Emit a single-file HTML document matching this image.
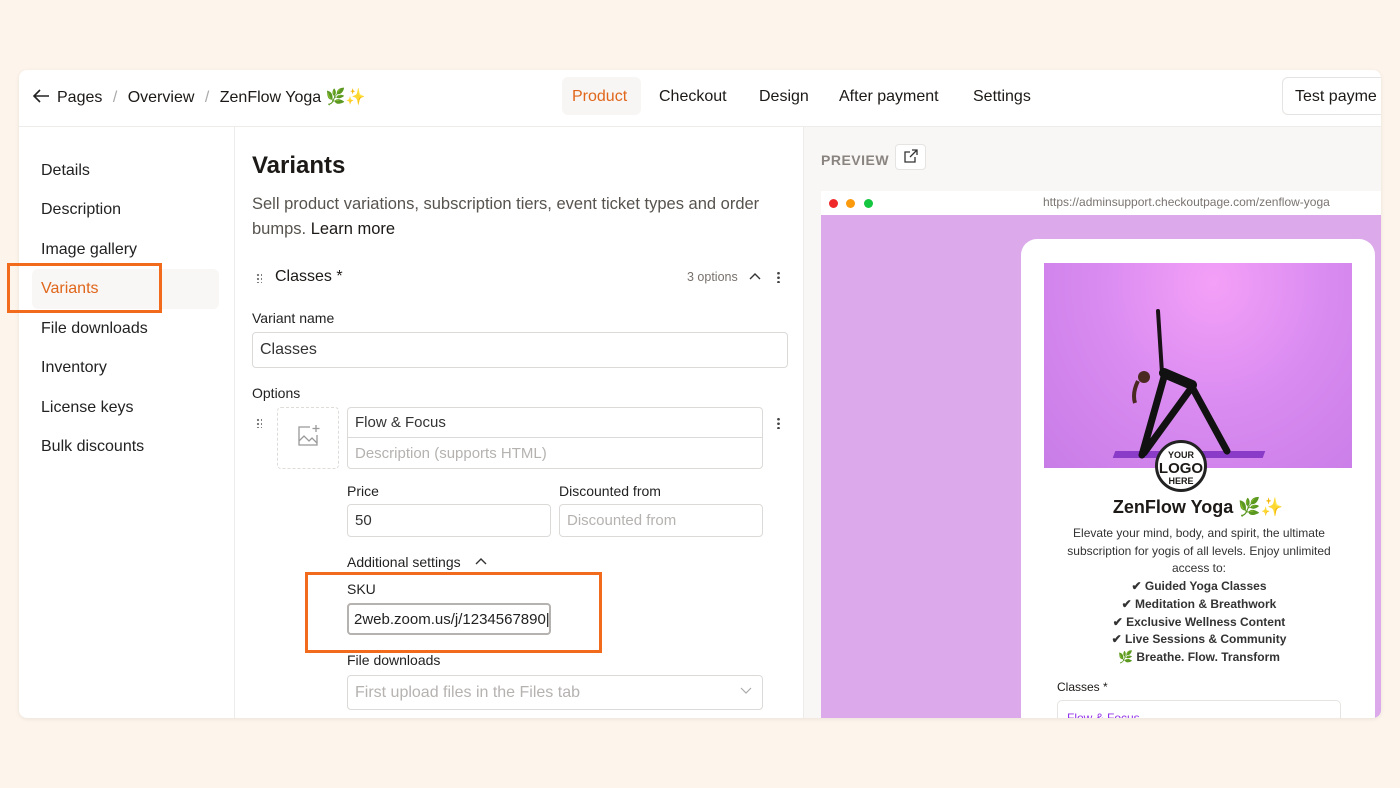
<!DOCTYPE html>
<html><head><meta charset="utf-8"><style>
*{box-sizing:border-box;margin:0;padding:0}
body{width:1400px;height:788px;background:#fdf4eb;font-family:"Liberation Sans","Noto Sans CJK SC",sans-serif;color:#1c1917;position:relative;overflow:hidden}
.win{position:absolute;left:19px;top:70px;width:1362px;height:648px;background:#fff;border-radius:8px;box-shadow:0 1px 4px rgba(0,0,0,.08);overflow:hidden}
.a{position:absolute;white-space:nowrap}
.hdr{position:absolute;left:0;top:0;width:1362px;height:57px;border-bottom:1px solid #eeeceb}
.side{position:absolute;left:0;top:57px;width:216px;height:600px;border-right:1px solid #eeeceb}
.prev{position:absolute;left:784px;top:57px;width:578px;height:600px;background:#f8f7f5;border-left:1px solid #eeeceb}
.inp{position:absolute;border:1px solid #dcdad8;border-radius:4px;background:#fff;font-size:15px;padding-left:7px;display:flex;align-items:center;color:#333}
.ph{color:#b5b2b0}
.lbl{position:absolute;font-size:14px;color:#222;white-space:nowrap}
.si{position:absolute;left:22px;font-size:16px;color:#222}
.dots{position:absolute;width:6px;height:10px;background-image:radial-gradient(circle,#777 1px,transparent 1.3px);background-size:4px 4px}
.vd{position:absolute;width:3px;height:12px;background-image:radial-gradient(circle,#444 1.2px,transparent 1.5px);background-size:3px 4.5px}
.ck{font-weight:bold;font-size:12px}
</style></head><body>
<div class="win">
 <div class="hdr">
  <svg class="a" style="left:13px;top:18px" width="18" height="16" viewBox="0 0 18 16"><path d="M17 8H2M8 2L2 8l6 6" fill="none" stroke="#222" stroke-width="1.6"/></svg>
  <div class="a" style="left:38px;top:17px;font-size:16px">Pages <span style="color:#aaa;margin:0 6px">/</span> Overview <span style="color:#aaa;margin:0 6px">/</span> ZenFlow Yoga 🌿✨</div>
  <div class="a" style="left:543px;top:7px;width:79px;height:38px;background:#f8f6f4;border-radius:6px"></div>
  <div class="a" style="left:553px;top:18px;font-size:16px;color:#e0661b">Product</div>
  <div class="a" style="left:640px;top:18px;font-size:16px">Checkout</div>
  <div class="a" style="left:740px;top:18px;font-size:16px">Design</div>
  <div class="a" style="left:820px;top:18px;font-size:16px">After payment</div>
  <div class="a" style="left:954px;top:18px;font-size:16px">Settings</div>
  <div class="a" style="left:1263px;top:7px;width:110px;height:38px;border:1px solid #e6e4e2;border-radius:6px;font-size:16px;padding:10px 0 0 12px">Test payme</div>
 </div>
 <div class="side">
  <div class="si" style="top:35px">Details</div>
  <div class="si" style="top:74px">Description</div>
  <div class="si" style="top:114px">Image gallery</div>
  <div class="a" style="left:13px;top:142px;width:187px;height:40px;background:#f8f7f5;border-radius:6px"></div>
  <div class="si" style="top:153px;color:#e0661b">Variants</div>
  <div class="si" style="top:193px">File downloads</div>
  <div class="si" style="top:232px">Inventory</div>
  <div class="si" style="top:272px">License keys</div>
  <div class="si" style="top:311px">Bulk discounts</div>
 </div>
 <div class="a" style="left:233px;top:82px;font-size:24px;font-weight:bold">Variants</div>
 <div class="a" style="left:233px;top:122px;font-size:16.5px;color:#57534e;line-height:25px;white-space:normal;width:540px">Sell product variations, subscription tiers, event ticket types and order bumps. <span style="color:#1c1917">Learn more</span></div>
 <div class="dots" style="left:237px;top:203px"></div>
 <div class="a" style="left:256px;top:198px;font-size:16px">Classes *</div>
 <div class="a" style="left:668px;top:200px;font-size:12.5px;color:#78716c">3 options</div>
 <svg class="a" style="left:730px;top:202px" width="12" height="8"><path d="M1 7l5-5 5 5" fill="none" stroke="#333" stroke-width="1.4"/></svg>
 <div class="vd" style="left:758px;top:201px"></div>
 <div class="lbl" style="left:233px;top:240px">Variant name</div>
 <div class="inp" style="left:233px;top:262px;width:536px;height:36px;font-size:16px">Classes</div>
 <div class="lbl" style="left:233px;top:315px">Options</div>
 <div class="dots" style="left:237px;top:348px"></div>
 <div class="a" style="left:258px;top:337px;width:62px;height:62px;border:1px dashed #dedbd8;border-radius:4px"></div>
 <svg class="a" style="left:277px;top:353px" width="26" height="26" viewBox="0 0 26 26"><path d="M14 4H3v18h18V12" fill="none" stroke="#999" stroke-width="1.3"/><path d="M20 2v7M16.5 5.5h7" stroke="#999" stroke-width="1.3"/><path d="M3 18l5-5 5 5 3-3 5 5" fill="none" stroke="#999" stroke-width="1.3"/></svg>
 <div class="a" style="left:328px;top:337px;width:416px;height:62px;border:1px solid #dcdad8;border-radius:4px"></div>
 <div class="a" style="left:328px;top:367px;width:416px;height:1px;background:#dcdad8"></div>
 <div class="a" style="left:336px;top:344px;font-size:15px;color:#333">Flow &amp; Focus</div>
 <div class="a ph" style="left:336px;top:375px;font-size:15px">Description (supports HTML)</div>
 <div class="vd" style="left:758px;top:347px"></div>
 <div class="lbl" style="left:328px;top:413px">Price</div>
 <div class="lbl" style="left:540px;top:413px">Discounted from</div>
 <div class="inp" style="left:328px;top:434px;width:204px;height:33px">50</div>
 <div class="inp ph" style="left:540px;top:434px;width:204px;height:33px">Discounted from</div>
 <div class="lbl" style="left:328px;top:484px">Additional settings</div>
 <svg class="a" style="left:456px;top:487px" width="12" height="8"><path d="M1 7l5-5 5 5" fill="none" stroke="#333" stroke-width="1.4"/></svg>
 <div class="lbl" style="left:328px;top:511px">SKU</div>
 <div class="inp" style="left:328px;top:533px;width:204px;height:32px;border:2px solid #b5b2b0;padding-left:5px;color:#222">2web.zoom.us/j/1234567890|</div>
 <div class="lbl" style="left:328px;top:582px">File downloads</div>
 <div class="inp ph" style="left:328px;top:605px;width:416px;height:35px;font-size:16px">First upload files in the Files tab</div>
 <svg class="a" style="left:721px;top:617px" width="12" height="8"><path d="M1 1l5 5 5-5" fill="none" stroke="#aaa" stroke-width="1.2"/></svg>
 <div class="prev">
  <div class="a" style="left:17px;top:25px;font-size:14px;color:#8a8480;letter-spacing:.5px;font-weight:bold">PREVIEW</div>
  <div class="a" style="left:91px;top:17px;width:31px;height:26px;background:#fff;border:1px solid #e6e4e2;border-radius:4px"></div>
  <svg class="a" style="left:99px;top:22px" width="15" height="15" viewBox="0 0 15 15"><path d="M7 3H2v10h10V8M9 1h5v5M14 1L7 8" fill="none" stroke="#333" stroke-width="1.3"/></svg>
  <div class="a" style="left:17px;top:64px;width:561px;height:25px;background:#fff"></div>
  <div class="a" style="left:25px;top:72px;width:9px;height:9px;border-radius:50%;background:#f02a2a"></div>
  <div class="a" style="left:42px;top:72px;width:9px;height:9px;border-radius:50%;background:#fb9a0d"></div>
  <div class="a" style="left:60px;top:72px;width:9px;height:9px;border-radius:50%;background:#14c640"></div>
  <div class="a" style="left:239px;top:68px;font-size:12px;color:#7a7470">https://adminsupport.checkoutpage.com/zenflow-yoga</div>
  <div class="a" style="left:17px;top:88px;width:561px;height:520px;background:#dcaaea"></div>
  <div class="a" style="left:217px;top:112px;width:354px;height:500px;background:#fff;border-radius:16px"></div>
  <div class="a" style="left:240px;top:136px;width:308px;height:205px;background:radial-gradient(ellipse at 55% 10%,#f4a0f8,#d88af0 50%,#c87ce6)"></div>
  <div class="a" style="left:310px;top:324px;width:150px;height:7px;background:#8a3cc8;transform:skewX(-20deg)"></div>
  <svg class="a" style="left:300px;top:180px" width="150" height="160" viewBox="0 0 150 160"><path d="M54 4l4 62" fill="none" stroke="#1a1218" stroke-width="4" stroke-linecap="round"/><path d="M60 66l28 12" fill="none" stroke="#111" stroke-width="10" stroke-linecap="round"/><path d="M60 70l-22 78M88 80l-48 66M88 80l35 64" fill="none" stroke="#111" stroke-width="7" stroke-linecap="round"/><circle cx="40" cy="70" r="6" fill="#4a2a20"/><path d="M34 74q-6 12 -3 22" stroke="#4a2a20" stroke-width="4" fill="none"/></svg>
  <div class="a" style="left:351px;top:313px;width:52px;height:52px;border-radius:50%;background:#fff;border:3px solid #222;font-size:9px;font-weight:bold;text-align:center;line-height:11px;padding-top:7px">YOUR<br><span style="font-size:15px;line-height:15px">LOGO</span><br>HERE</div>
  <div class="a" style="left:217px;top:370px;width:354px;text-align:center;font-size:18px;font-weight:bold">ZenFlow Yoga 🌿✨</div>
  <div class="a" style="left:250px;top:398px;width:290px;text-align:center;font-size:12px;line-height:17.7px;white-space:normal;color:#333">Elevate your mind, body, and spirit, the ultimate subscription for yogis of all levels. Enjoy unlimited access to:<br><span class="ck">✔ Guided Yoga Classes<br>✔ Meditation &amp; Breathwork<br>✔ Exclusive Wellness Content<br>✔ Live Sessions &amp; Community<br>🌿 Breathe. Flow. Transform</span></div>
  <div class="a" style="left:253px;top:553px;font-size:12px">Classes *</div>
  <div class="a" style="left:253px;top:573px;width:284px;height:40px;border:1px solid #e6e4e2;border-radius:5px"></div>
  <div class="a" style="left:263px;top:584px;font-size:12px;color:#9333ea">Flow &amp; Focus</div>
 </div>
</div>
<div class="a" style="left:7px;top:263px;width:155px;height:50px;border:3px solid #f26a1b"></div>
<div class="a" style="left:305px;top:572px;width:297px;height:81px;border:3px solid #f26a1b"></div>
</body></html>
